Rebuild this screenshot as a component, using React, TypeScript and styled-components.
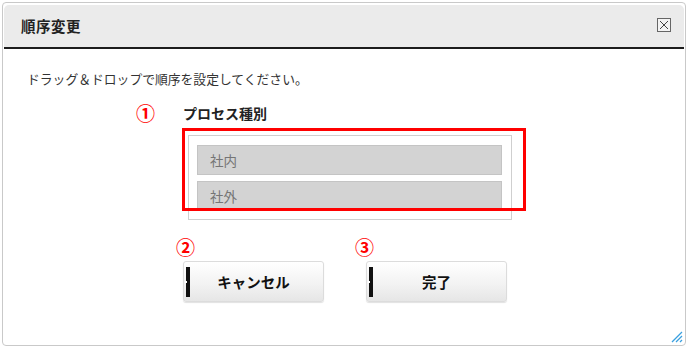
import React from "react";
import styled, { createGlobalStyle } from "styled-components";

const Global = createGlobalStyle`
  html, body { margin: 0; padding: 0; background: #ffffff; }
  body { font-family: "Noto Sans CJK JP", "Noto Sans", sans-serif; color: #333; }
  * { box-sizing: border-box; }
`;

const Dialog = styled.div`
  position: relative;
  margin: 2px 0 0 2px;
  width: 684px;
  height: 344px;
  border: 1px solid #c9c9c9;
  border-radius: 4px;
  padding: 2px 1px 0 1px;
  background: #fff;
  display: flex;
  flex-direction: column;
`;

const Header = styled.div`
  height: 44px;
  background: #ebebeb;
  border-radius: 5px 5px 0 0;
  border-bottom: 2px solid #1c1c1c;
  display: flex;
  align-items: center;
  justify-content: space-between;
  padding: 0 13px 2px 17px;
`;

const Title = styled.h1`
  margin: 0;
  font-size: 14.5px;
  font-weight: bold;
  color: #222;
  letter-spacing: 0.5px;
`;

const CloseBox = styled.button`
  width: 14px;
  height: 14px;
  padding: 0;
  border: 1px solid #666;
  background: #f4f4f4;
  display: flex;
  align-items: center;
  justify-content: center;
  cursor: pointer;
`;

const Body = styled.div`
  flex: 1;
  padding: 20px 0 0 23px;
  display: flex;
  flex-direction: column;
`;

const Description = styled.p`
  margin: 0;
  font-size: 12.8px;
  line-height: 20px;
  color: #333;
`;

const Panel = styled.div`
  margin: 14px 0 0 156px;
  display: flex;
  flex-direction: column;
`;

const LabelRow = styled.div`
  position: relative;
  font-size: 14px;
  font-weight: bold;
  line-height: 20px;
  color: #222;
`;

const Marker = styled.span<{ $left: number; $top: number }>`
  position: absolute;
  left: ${(p) => p.$left}px;
  top: ${(p) => p.$top}px;
  color: #ff0000;
  font-size: 19px;
  line-height: 18px;
  font-weight: bold;
`;

const ListWrap = styled.div`
  position: relative;
  margin: 12px 0 0 5px;
  width: 324px;
`;

const ListBox = styled.div`
  height: 85px;
  border: 1px solid #cfcfcf;
  padding: 9px 9px 0 8px;
  display: flex;
  flex-direction: column;
  gap: 6px;
`;

const Item = styled.div`
  height: 30px;
  background: #d3d3d3;
  border: 1px solid #c4c4c4;
  color: #757575;
  font-size: 13.5px;
  line-height: 28px;
  padding-left: 12px;
`;

const RedFrame = styled.div`
  position: absolute;
  left: -6px;
  top: -7px;
  width: 344px;
  height: 83px;
  border: 3px solid #ff0000;
  pointer-events: none;
`;

const ButtonRow = styled.div`
  display: flex;
  gap: 42px;
  margin-top: 41px;
`;

const ButtonSlot = styled.div`
  position: relative;
`;

const Button = styled.button`
  position: relative;
  width: 141px;
  height: 41px;
  border: 1px solid #dcdcdc;
  border-radius: 3px;
  background: linear-gradient(#ffffff, #f3f3f3 55%, #e6e6e6);
  box-shadow: 0 1px 1px rgba(0, 0, 0, 0.12);
  font-family: inherit;
  font-size: 14.5px;
  font-weight: bold;
  color: #111;
  cursor: pointer;
  &::before {
    content: "";
    position: absolute;
    left: 2px;
    top: 5px;
    bottom: 4px;
    width: 4px;
    background: #111;
  }
  &::after {
    content: "";
    position: absolute;
    left: 1px;
    top: 19px;
    width: 2px;
    height: 2px;
    background: #fff;
  }
`;

const Grip = styled.svg`
  position: absolute;
  right: 2px;
  bottom: 2px;
`;

export default function App() {
  return (
    <>
      <Global />
      <Dialog>
        <Header>
          <Title>順序変更</Title>
          <CloseBox aria-label="close">
            <svg width="10" height="10" viewBox="0 0 10 10">
              <path d="M1 1 L9 9 M9 1 L1 9" stroke="#444" strokeWidth="1" fill="none" />
            </svg>
          </CloseBox>
        </Header>
        <Body>
          <Description>ドラッグ＆ドロップで順序を設定してください。</Description>
          <Panel>
            <LabelRow>
              <Marker $left={-47} $top={1}>①</Marker>
              プロセス種別
            </LabelRow>
            <ListWrap>
              <ListBox>
                <Item>社内</Item>
                <Item>社外</Item>
              </ListBox>
              <RedFrame />
            </ListWrap>
            <ButtonRow>
              <ButtonSlot>
                <Marker $left={-7} $top={-23}>②</Marker>
                <Button>キャンセル</Button>
              </ButtonSlot>
              <ButtonSlot>
                <Marker $left={-11} $top={-23}>③</Marker>
                <Button>完了</Button>
              </ButtonSlot>
            </ButtonRow>
          </Panel>
        </Body>
        <Grip width="14" height="14" viewBox="0 0 14 14">
          <path d="M13 3 L3 13 M13 7 L7 13 M13 11 L11 13" stroke="#3aa0e0" strokeWidth="1.3" fill="none" />
        </Grip>
      </Dialog>
    </>
  );
}
